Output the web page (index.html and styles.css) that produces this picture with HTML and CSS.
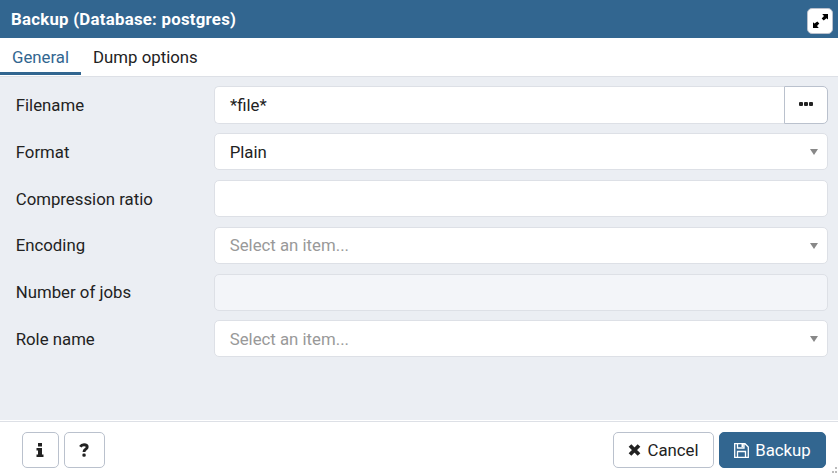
FILE: index.html
```html
<!DOCTYPE html>
<html lang="en">
<head>
<meta charset="utf-8">
<title>Backup (Database: postgres)</title>
<link rel="stylesheet" href="styles.css">
</head>
<body>
<main class="dialog">
  <header class="header">
    <h1 class="title">Backup (Database: postgres)</h1>
    <button class="maximize" aria-label="Maximize">
      <svg width="15" height="14" viewBox="0 0 15 14"><path d="M9.200 0H15v5.500l-1.500-1.300-2.800 2.200-2-2L11 2zM0 14V8.200l1.500 1.300L4.300 7.500l2 2L4 12l1.800 2z"/></svg>
    </button>
  </header>
  <nav class="tabs">
    <a class="tab active">General</a>
    <a class="tab">Dump options</a>
  </nav>
  <section class="form">
    <div class="row"><label>Filename</label><div class="group"><div class="control file">*file*</div><button class="browse" aria-label="Browse"><svg width="14" height="4" viewBox="0 0 14 4"><rect width="4" height="4" rx="1"/><rect x="5" width="4" height="4" rx="1"/><rect x="10" width="4" height="4" rx="1"/></svg></button></div></div>
    <div class="row"><label>Format</label><div class="control select">Plain</div></div>
    <div class="row"><label>Compression ratio</label><div class="control"></div></div>
    <div class="row"><label>Encoding</label><div class="control select placeholder">Select an item...</div></div>
    <div class="row"><label>Number of jobs</label><div class="control disabled"></div></div>
    <div class="row"><label>Role name</label><div class="control select placeholder">Select an item...</div></div>
  </section>
  <footer class="footer">
    <button class="btn info" aria-label="Information"><svg width="8" height="14" viewBox="0 0 8 14"><path d="M2 0h4v3.500H2zM.5 5H6v6.500h1.500V14H.5v-2.500H2v-4H.5z"/></svg></button>
    <button class="btn help" aria-label="Help"><svg width="10" height="14" viewBox="0 0 10 14"><path class="line" d="M1.300 3.800C2.300 2.200 3.500 1.700 5 1.700c2 0 3.200.8 3.200 2.300 0 2.300-3.200 2-3.200 5" stroke-width="2.900"/><rect x="3.400" y="10.500" width="3.300" height="3.300" rx="1.300"/></svg></button>
    <span class="spacer"></span>
    <button class="btn cancel"><svg width="13" height="12" viewBox="0 0 13 12"><path class="line" d="M2 1.500l9 9M11 1.500l-9 9" stroke-width="3.800"/></svg>Cancel</button>
    <button class="btn primary"><svg width="15" height="15" viewBox="0 0 15 15"><path class="line" d="M.7.7h10.300l3.300 3.300v10.300H.7zM3.500.7v4.300h6.500V.7M3.500 14V8.500h8V14" stroke-width="1.300"/><path d="M7.500 1h2v3h-2z"/></svg>Backup</button>
  </footer>
  <svg class="grip" width="7" height="6" viewBox="0 0 7 6"><path d="M4 0h2v2H4zM1 4h2v2H1zM4 4h2v2H4z"/></svg>
</main>
</body>
</html>
```
FILE: styles.css
```css
* { box-sizing: border-box; }
body { margin: 0; font: 16.8px/25px Roboto, "Liberation Sans", sans-serif; color: #222; }
button { font: inherit; color: inherit; margin: 0; padding: 0; }
svg { display: block; fill: currentColor; flex: none; }
.line { fill: none; stroke: currentColor; }

.dialog { position: relative; display: flex; flex-direction: column; width: 838px; height: 473px; overflow: hidden; background: #fff; }
.header { display: flex; align-items: center; justify-content: space-between; height: 38px; padding: 3px 5px 0 11px; background: #326690; color: #fff; }
.title { margin: -2px 0 0; font-size: 16.8px; font-weight: 700; letter-spacing: .26px; }
.maximize { display: flex; align-items: center; justify-content: center; width: 26px; height: 26px; margin-top: 1px; border: 1px solid #bac1cd; border-radius: 5px; background: #fff; color: #000; }

.tabs { display: flex; height: 39px; border-bottom: 1px solid #dde0e6; }
.tab { height: 37px; padding: 7px 12px 0; }
.active { border-bottom: 3px solid #326690; color: #326690; }

.form { flex: 1; display: flex; flex-direction: column; gap: 9.6px; padding: 9.400px 10px 0 16px; background: #ebeef3; }
.row { display: grid; grid-template-columns: 198px 1fr; align-items: center; height: 37.200px; }
.row label { padding-top: 1.200px; margin-left: -.3px; }
.control { height: 37.200px; padding: 5.500px 15px; border: 1px solid #dde0e6; border-radius: 5px; background: #fff; }
.group { display: flex; }
.file { flex: 1; border-right: 0; border-radius: 5px 0 0 5px; }
.browse { display: flex; align-items: center; justify-content: center; width: 44px; height: 37.200px; padding-bottom: 1px; border: 1px solid #bac1cd; border-radius: 0 5px 5px 0; background: #fff; }
.select { display: flex; align-items: center; justify-content: space-between; padding: 6.300px 9px 5.500px 14.700px; }
.select::after { content: ""; border: 4px solid transparent; border-top: 6px solid #888; border-bottom: 0; }
.placeholder { color: #999; }
.disabled { background: #f3f5f9; }

.footer { display: flex; height: 52px; margin-top: 1px; padding: 10px 12px 0 22px; border-top: 1px solid #dde0e6; }
.btn { display: flex; align-items: center; justify-content: center; height: 36px; border: 1px solid #bac1cd; border-radius: 5px; background: #fff; }
.info { width: 37px; margin-right: 5px; }
.info svg, .help svg { margin: -1px 1px 0 0; }
.help { width: 41px; }
.spacer { flex: 1; }
.cancel { width: 101px; margin-right: 5px; gap: 6px; }
.primary { width: 107px; gap: 6px; border-color: #326690; background: #326690; color: #fff; }
.grip { position: absolute; right: 0; bottom: 0; color: #bbb; }
```
